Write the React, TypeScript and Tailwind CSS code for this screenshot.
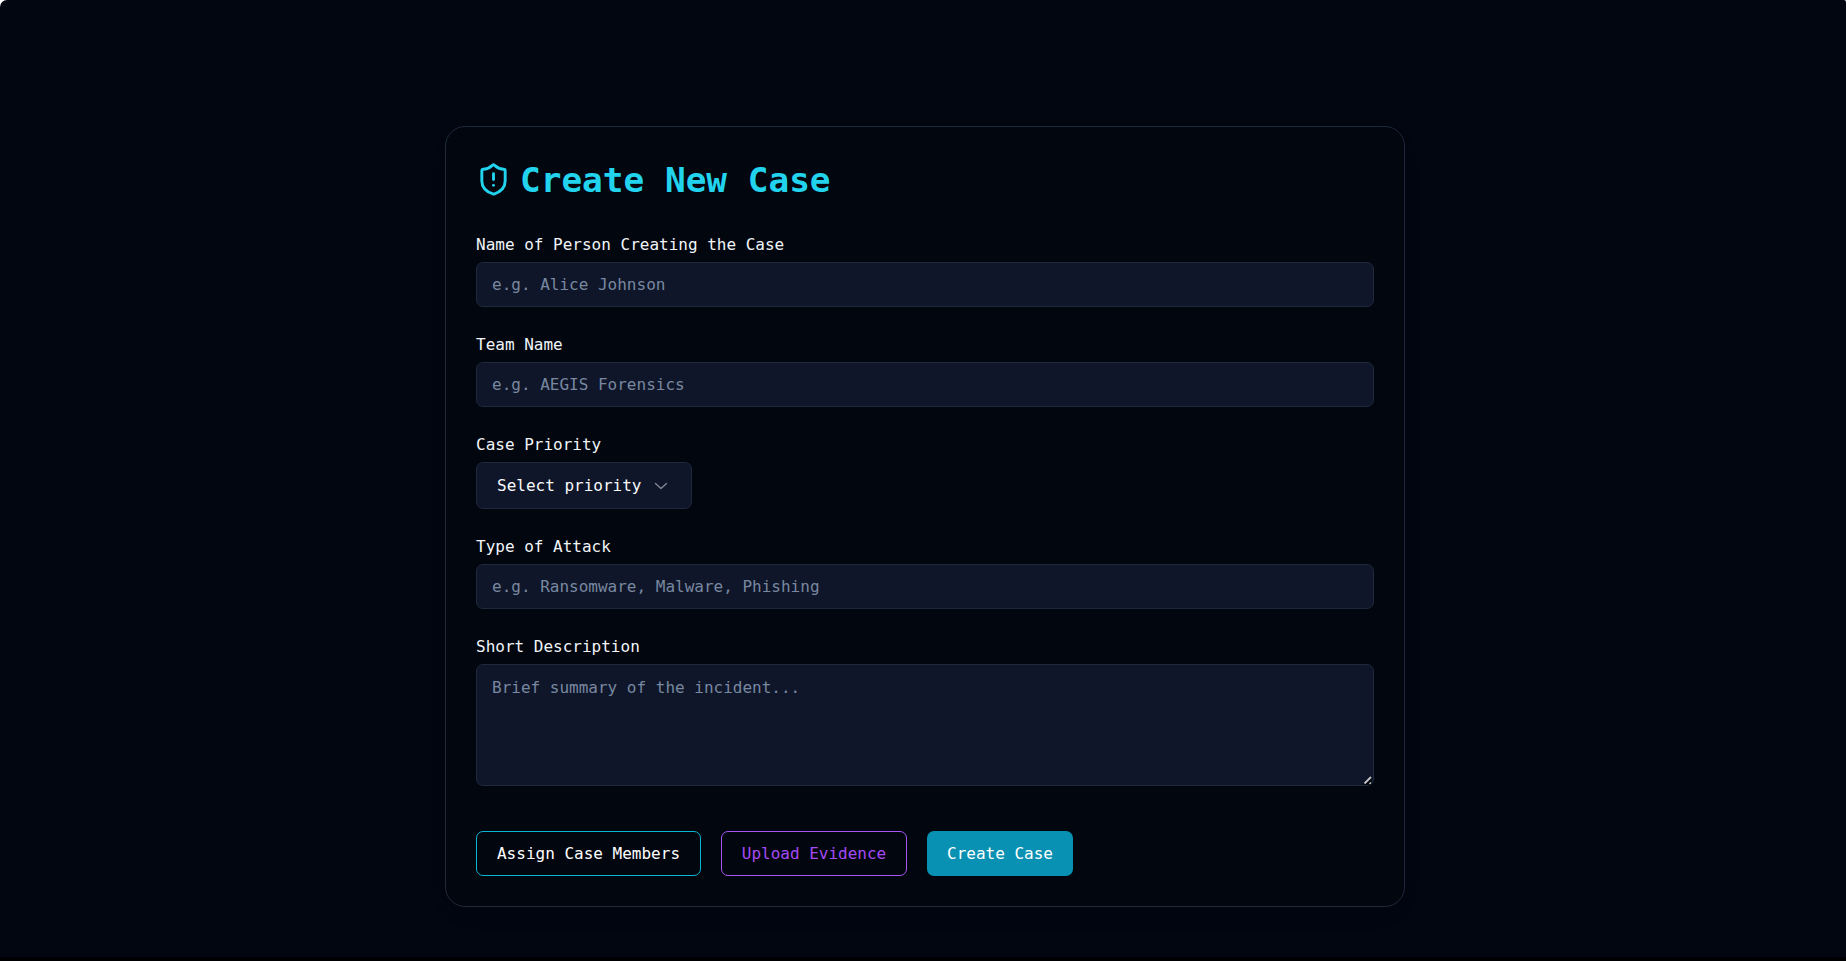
import type { ReactNode } from "react";

const fieldClass =
  "block w-full rounded-[7px] border border-[#1e293b] bg-[#0f1629] px-[15px] text-[16px] text-white outline-none placeholder:text-[#7888a0] placeholder:opacity-100";

function Field({ label, children }: { label: string; children: ReactNode }) {
  return (
    <div>
      <label className="block h-[35px] pt-[6px] text-[16px] leading-[24px] text-[#f1f5f9]">{label}</label>
      {children}
    </div>
  );
}

function ShieldIcon() {
  return (
    <svg className="size-[35px] shrink-0 text-[#22d3ee]" viewBox="0 0 24 24" fill="none" stroke="currentColor" strokeWidth="2" strokeLinecap="round" strokeLinejoin="round">
      <path d="M20 13c0 5-3.500 7.500-7.660 8.950a1 1 0 0 1-.67-.01C7.500 20.500 4 18 4 13V6a1 1 0 0 1 1-1c2 0 4.500-1.200 6.240-2.720a1.170 1.170 0 0 1 1.520 0C14.510 3.810 17 5 19 5a1 1 0 0 1 1 1z" />
      <path d="M12 8v4" />
      <path d="M12 16h.01" />
    </svg>
  );
}

function ChevronIcon() {
  return (
    <svg className="h-[8px] w-[14px] shrink-0 text-[#858a95]" viewBox="0 0 14 8" fill="none" stroke="currentColor" strokeWidth="1.3" strokeLinecap="round" strokeLinejoin="round">
      <path d="M1.500 1.500 7 6.500l5.500-5" />
    </svg>
  );
}

function ResizeGrip() {
  return (
    <svg className="pointer-events-none absolute right-[2px] bottom-[1px] h-[10px] w-[10px]" viewBox="0 0 10 10" fill="none">
      <path d="M0.500 9.500 9.500 0.500V10H1z" fill="#05070e" />
      <path d="M2.500 8.500 9 2" stroke="#c4c6ca" strokeWidth="1.8" />
      <path d="M7.500 9 9 7.500" stroke="#c4c6ca" strokeWidth="1.5" />
    </svg>
  );
}

export default function App() {
  return (
    <div className="h-[961px] w-full overflow-hidden bg-white font-['DejaVu_Sans_Mono',monospace]">
      <main className="flex h-full justify-center rounded-tl-[7px] rounded-tr-[2px] border-b-4 border-[#000002] bg-[#020610] pt-[126px] pl-[4px]">
        <section className="h-[781px] w-[960px] rounded-[20px] border border-[#1e293b] bg-[#02060f] px-[30px] pt-[30px] shadow-[0_10px_20px_rgba(0,0,0,0.04)]">
          <h1 className="flex h-[44px] items-center gap-[9px] text-[34.4px] font-bold leading-[44px] text-[#22d3ee]">
            <ShieldIcon />
            <span className="pt-[2px]">Create New Case</span>
          </h1>
          <form className="pt-[26px]" onSubmit={(e) => e.preventDefault()}>
            <div className="flex flex-col gap-[20px]">
              <Field label="Name of Person Creating the Case">
                <input className={`${fieldClass} h-[45px]`} placeholder="e.g. Alice Johnson" />
              </Field>
              <Field label="Team Name">
                <input className={`${fieldClass} h-[45px]`} placeholder="e.g. AEGIS Forensics" />
              </Field>
              <Field label="Case Priority">
                <button type="button" className="flex h-[47px] w-[216px] items-center gap-[12px] rounded-[7px] border border-[#1e293b] bg-[#0f1629] pl-[20px] text-[16px] text-[#f8fafc]">
                  Select priority
                  <ChevronIcon />
                </button>
              </Field>
              <Field label="Type of Attack">
                <input className={`${fieldClass} h-[45px]`} placeholder="e.g. Ransomware, Malware, Phishing" />
              </Field>
              <Field label="Short Description">
                <div className="relative">
                  <textarea className={`${fieldClass} h-[122px] resize-none py-[10px] leading-[25px]`} placeholder="Brief summary of the incident..." />
                  <ResizeGrip />
                </div>
              </Field>
            </div>
            <div className="mt-[45px] flex gap-[20px] text-[16px]">
              <button type="button" className="h-[45px] w-[225px] rounded-[7px] border border-[#06b6d4] text-white">Assign Case Members</button>
              <button type="button" className="h-[45px] w-[186px] rounded-[7px] border border-[#a855f7] text-[#a54af5]">Upload Evidence</button>
              <button type="submit" className="h-[45px] w-[146px] rounded-[7px] bg-[#0891b2] text-white">Create Case</button>
            </div>
          </form>
        </section>
      </main>
    </div>
  );
}
